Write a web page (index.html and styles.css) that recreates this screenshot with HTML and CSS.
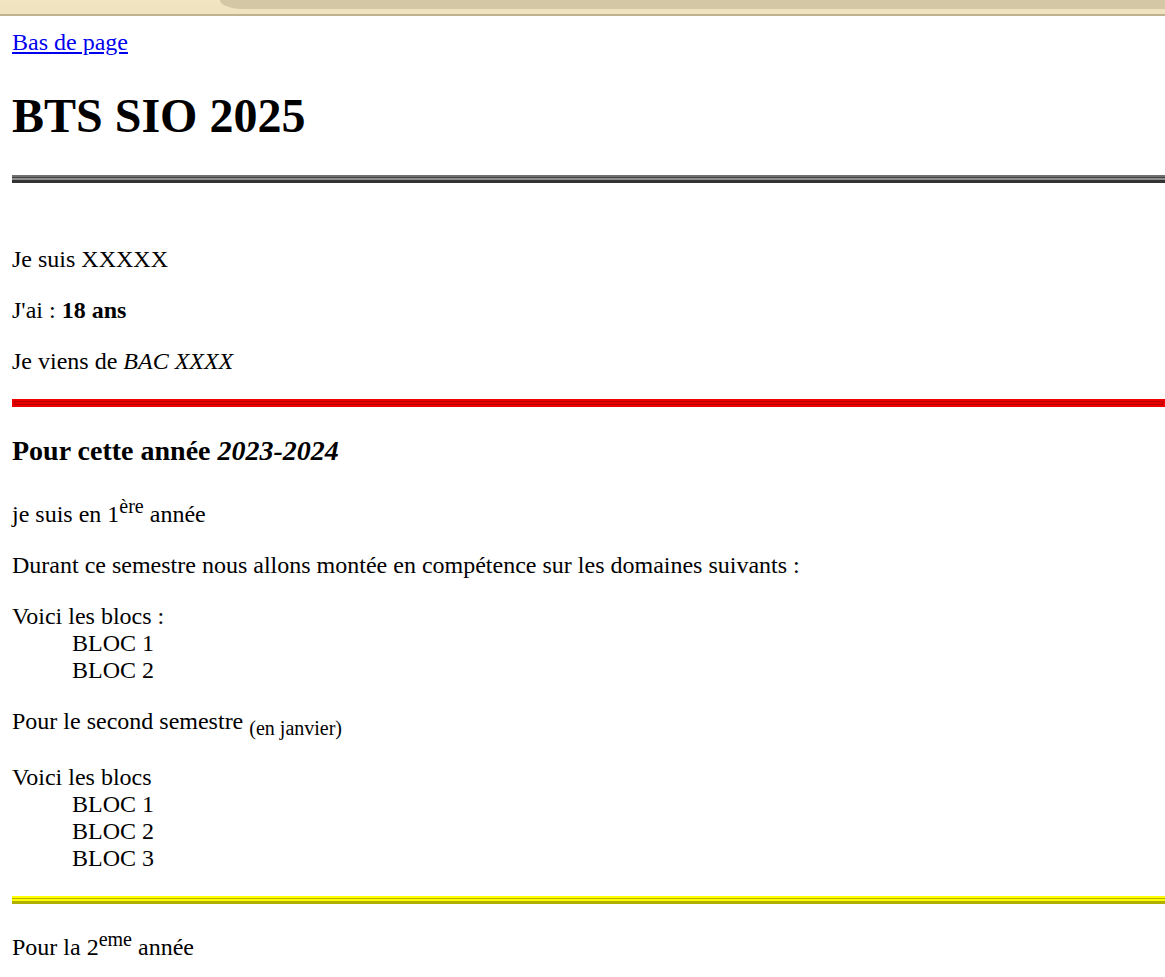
FILE: index.html
```html
<!DOCTYPE html>
<html lang="fr">
<head>
<meta charset="utf-8">
<title>BTS SIO 2025</title>
<link rel="stylesheet" href="styles.css">
</head>
<body>
<div class="chrome"><div class="chrome-tab"></div></div>
<main class="page">
<a class="link" href="#bas">Bas de page</a>
<h1 class="title">BTS SIO 2025</h1>
<hr class="rule rule-gray">
<br>
<p class="para">Je suis XXXXX</p>
<p class="para">J'ai : <b>18 ans</b></p>
<p class="para">Je viens de <i>BAC XXXX</i></p>
<hr class="rule rule-red">
<h3 class="subtitle">Pour cette année <i>2023-2024</i></h3>
<p class="para">je suis en 1<sup class="sup">ère</sup> année</p>
<p class="para">Durant ce semestre nous allons montée en compétence sur les domaines suivants :</p>
<dl class="blocs">
<dt>Voici les blocs :</dt>
<dd>BLOC 1</dd>
<dd>BLOC 2</dd>
</dl>
<p class="para">Pour le second semestre <sub class="sub">(en janvier)</sub></p>
<dl class="blocs">
<dt>Voici les blocs</dt>
<dd>BLOC 1</dd>
<dd>BLOC 2</dd>
<dd>BLOC 3</dd>
</dl>
<hr class="rule rule-yellow">
<p class="para" id="bas">Pour la 2<sup class="sup">eme</sup> année</p>
</main>
</body>
</html>
```
FILE: styles.css
```css
html, body {
  margin: 0;
  padding: 0;
  background: #ffffff;
}
body {
  font-family: "Liberation Serif", "Times New Roman", serif;
  font-size: 24px;
  color: #000;
  overflow: hidden;
}
.chrome {
  height: 16px;
  background: linear-gradient(#f1e5c2, #eee2bf);
  border-bottom: 2px solid #bfb38f;
  box-sizing: border-box;
  display: flex;
  justify-content: flex-end;
}
.chrome-tab {
  width: 945px;
  height: 9px;
  background: #d4c7a6;
  border-bottom-left-radius: 22px 9px;
}
.page {
  padding: 13px 12px 12px;
}
.link {
  color: #0000ee;
  text-decoration: underline;
}
.title {
  font-size: 48px;
  font-weight: bold;
  margin: 32px 0;
}
.subtitle {
  font-size: 28px;
  font-weight: bold;
  margin: 28px 0;
}
.para {
  margin: 24px 0;
}
.sup {
  font-size: 20px;
}
.sub {
  font-size: 20px;
}
.blocs {
  margin: 24px 0;
}
.blocs dd {
  margin-left: 60px;
}
.rule {
  border: 0;
  margin: 12px -12px 12px 0;
  height: 8px;
}
.rule-gray {
  background: linear-gradient(#6f6f6f 0 2px, #444 2px 3px, #8d8d8d 3px 5px, #333 5px 8px);
}
.rule-red {
  background: #e60000;
  box-shadow: inset 0 0 0 2px #ee0000, inset 0 0 0 3px #b80000;
}
.rule-yellow {
  background: linear-gradient(#ffff00 0 2px, #b5b500 2px 3px, #ffff00 3px 5px, #b0b000 5px 8px);
}
```
